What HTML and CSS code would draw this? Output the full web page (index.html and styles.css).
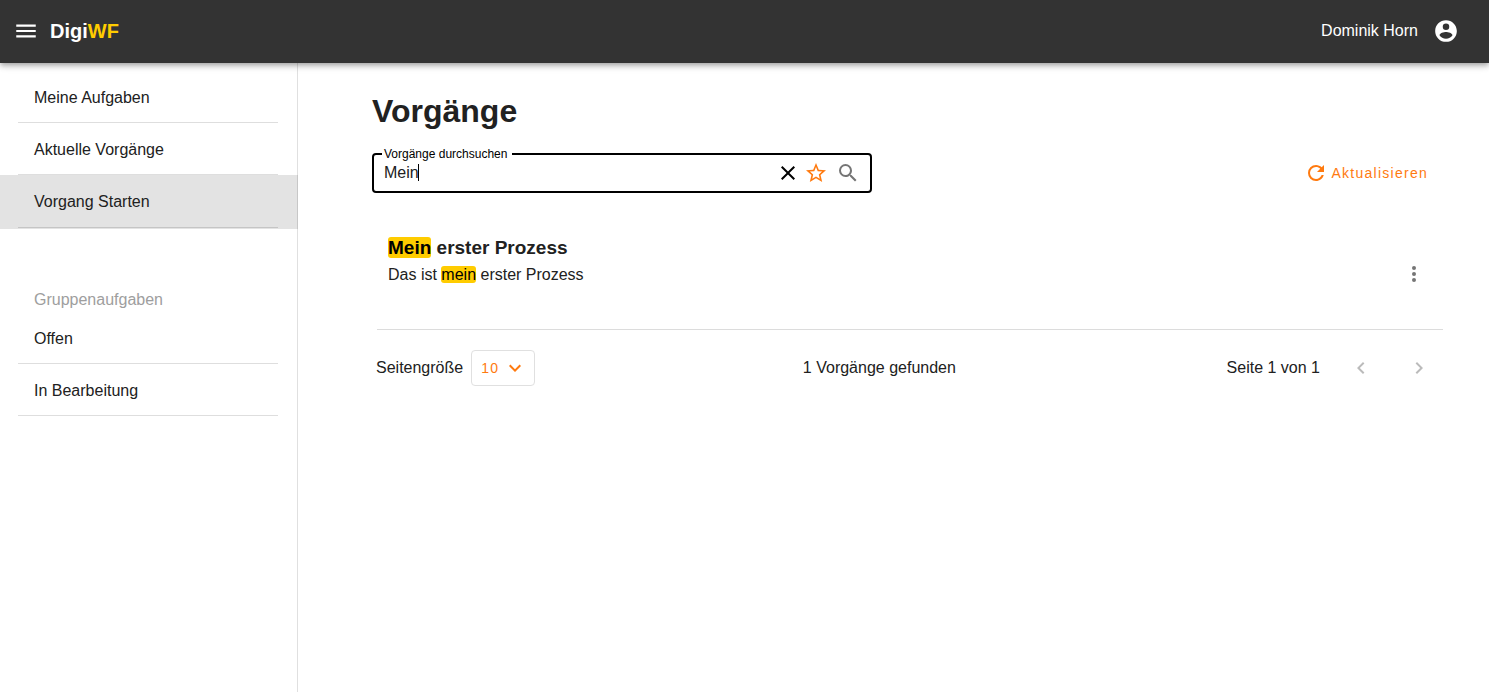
FILE: index.html
```html
<!DOCTYPE html>
<html lang="de">
<head>
<meta charset="utf-8">
<meta name="viewport" content="width=device-width, initial-scale=1">
<title>DigiWF</title>
<link rel="stylesheet" href="styles.css">
</head>
<body>
<header class="app-bar">
  <button class="icon-button bar-button" type="button" aria-label="Menü">
    <svg class="icon-large" viewBox="0 0 24 24"><path d="M3,6H21V8H3V6M3,11H21V13H3V11M3,16H21V18H3V16Z"/></svg>
  </button>
  <a class="brand" href="#">Digi<span class="brand-accent">WF</span></a>
  <span class="user-name">Dominik Horn</span>
  <button class="icon-button bar-button" type="button" aria-label="Benutzerkonto">
    <svg class="icon-large" viewBox="0 0 24 24"><path d="M12,19.2C9.5,19.2 7.29,17.92 6,16C6.03,14 10,12.9 12,12.9C14,12.9 17.97,14 18,16C16.71,17.92 14.5,19.2 12,19.2M12,5A3,3 0 0,1 15,8A3,3 0 0,1 12,11A3,3 0 0,1 9,8A3,3 0 0,1 12,5M12,2A10,10 0 0,0 2,12A10,10 0 0,0 12,22A10,10 0 0,0 22,12C22,6.47 17.5,2 12,2Z"/></svg>
  </button>
</header>
<div class="layout">
  <nav class="sidebar">
    <ul class="nav-list">
      <li class="nav-item"><a class="nav-link" href="#">Meine Aufgaben</a></li>
      <li class="nav-item"><a class="nav-link" href="#">Aktuelle Vorgänge</a></li>
      <li class="nav-item nav-item-active"><a class="nav-link" href="#" aria-current="page">Vorgang Starten</a></li>
    </ul>
    <h2 class="nav-heading">Gruppenaufgaben</h2>
    <ul class="nav-list">
      <li class="nav-item"><a class="nav-link" href="#">Offen</a></li>
      <li class="nav-item"><a class="nav-link" href="#">In Bearbeitung</a></li>
    </ul>
  </nav>
  <main class="content">
    <h1 class="page-title">Vorgänge</h1>
    <div class="toolbar">
      <fieldset class="search">
        <legend class="search-legend"><label for="search">Vorgänge durchsuchen</label></legend>
        <div class="search-row">
          <div class="search-field">
            <input class="search-input" id="search" type="text" value="Mein">
            <span class="caret"></span>
          </div>
          <button class="icon-button clear" type="button" aria-label="Leeren">
            <svg class="icon" viewBox="0 0 24 24"><path d="M19,6.41L17.59,5L12,10.59L6.41,5L5,6.41L10.59,12L5,17.59L6.41,19L12,13.41L17.59,19L19,17.59L13.41,12L19,6.41Z"/></svg>
          </button>
          <button class="icon-button accent" type="button" aria-label="Favorit">
            <svg class="icon" viewBox="0 0 24 24"><path d="M12,15.39L8.24,17.66L9.23,13.38L5.91,10.5L10.29,10.13L12,6.09L13.71,10.13L18.09,10.5L14.77,13.38L15.76,17.66M22,9.24L14.81,8.63L12,2L9.19,8.63L2,9.24L7.45,13.97L5.82,21L12,17.27L18.18,21L16.54,13.97L22,9.24Z"/></svg>
          </button>
          <button class="icon-button find" type="button" aria-label="Suchen">
            <svg class="icon" viewBox="0 0 24 24"><path d="M9.5,3A6.5,6.5 0 0,1 16,9.5C16,11.11 15.41,12.59 14.44,13.73L14.71,14H15.5L20.5,19L19,20.5L14,15.5V14.71L13.73,14.44C12.59,15.41 11.11,16 9.5,16A6.5,6.5 0 0,1 3,9.5A6.5,6.5 0 0,1 9.5,3M9.5,5C7,5 5,7 5,9.5C5,12 7,14 9.5,14C12,14 14,12 14,9.5C14,7 12,5 9.5,5Z"/></svg>
          </button>
        </div>
      </fieldset>
      <button class="refresh" type="button">
        <svg class="icon" viewBox="0 0 24 24"><path d="M17.65,6.35C16.2,4.9 14.21,4 12,4A8,8 0 0,0 4,12A8,8 0 0,0 12,20C15.73,20 18.84,17.45 19.73,14H17.65C16.83,16.33 14.61,18 12,18A6,6 0 0,1 6,12A6,6 0 0,1 12,6C13.66,6 15.14,6.69 16.22,7.78L13,11H20V4L17.65,6.35Z"/></svg>
        Aktualisieren
      </button>
    </div>
    <article class="process">
      <div class="process-text">
        <h2 class="process-title"><mark class="hit">Mein</mark> erster Prozess</h2>
        <p class="process-description">Das ist <mark class="hit">mein</mark> erster Prozess</p>
      </div>
      <button class="icon-button muted" type="button" aria-label="Weitere Aktionen">
        <svg class="icon" viewBox="0 0 24 24"><path d="M12,16A2,2 0 0,1 14,18A2,2 0 0,1 12,20A2,2 0 0,1 10,18A2,2 0 0,1 12,16M12,10A2,2 0 0,1 14,12A2,2 0 0,1 12,14A2,2 0 0,1 10,12A2,2 0 0,1 12,10M12,4A2,2 0 0,1 14,6A2,2 0 0,1 12,8A2,2 0 0,1 10,6A2,2 0 0,1 12,4Z"/></svg>
      </button>
    </article>
    <footer class="pager">
      <div class="page-size">
        <label for="page-size">Seitengröße</label>
        <div class="select-box">
          <select class="select" id="page-size"><option>10</option><option>20</option><option>50</option></select>
          <svg class="icon select-arrow" viewBox="0 0 24 24"><path d="M7.41,8.58L12,13.17L16.59,8.58L18,10L12,16L6,10L7.41,8.58Z"/></svg>
        </div>
      </div>
      <span>1 Vorgänge gefunden</span>
      <div class="page-nav">
        <span>Seite 1 von 1</span>
        <div class="page-buttons">
          <button class="icon-button page-button" type="button" aria-label="Vorherige Seite" disabled>
            <svg class="icon" viewBox="0 0 24 24"><path d="M15.41,16.58L10.83,12L15.41,7.41L14,6L8,12L14,18L15.41,16.58Z"/></svg>
          </button>
          <button class="icon-button page-button" type="button" aria-label="Nächste Seite" disabled>
            <svg class="icon" viewBox="0 0 24 24"><path d="M8.59,16.58L13.17,12L8.59,7.41L10,6L16,12L10,18L8.59,16.58Z"/></svg>
          </button>
        </div>
      </div>
    </footer>
  </main>
</div>
</body>
</html>
```
FILE: styles.css
```css
* {
  box-sizing: border-box;
}

body {
  display: flex;
  flex-direction: column;
  min-height: 100vh;
  margin: 0;
  background: #fff;
  color: #212121;
  font: 16px/24px "Liberation Sans", Arial, sans-serif;
}

button,
input,
select {
  margin: 0;
  padding: 0;
  border: 0;
  background: none;
  color: inherit;
  font: inherit;
}

a {
  color: inherit;
  text-decoration: none;
}

svg {
  display: block;
  fill: currentColor;
}

.icon {
  flex: none;
  width: 24px;
  height: 24px;
}

.icon-large {
  width: 26px;
  height: 26px;
}

.icon-button {
  display: flex;
  flex: none;
  align-items: center;
  justify-content: center;
}

/* App bar */

.app-bar {
  position: relative;
  z-index: 1;
  display: flex;
  align-items: center;
  padding: 18px 30px 19px 13px;
  background: #333;
  color: #fff;
  box-shadow: 0 2px 4px -1px rgba(0, 0, 0, .2), 0 4px 5px rgba(0, 0, 0, .14), 0 1px 10px rgba(0, 0, 0, .12);
}

.brand {
  margin: 0 auto 0 11px;
  font-size: 20px;
  font-weight: bold;
}

.brand-accent {
  color: #fc0;
}

.user-name {
  margin-right: 15px;
}

/* Sidebar */

.layout {
  display: flex;
  flex: 1;
}

.sidebar {
  flex: none;
  width: 298px;
  padding-top: 8px;
  border-right: 1px solid #e0e0e0;
}

.nav-list {
  margin: 0;
  padding: 0;
  list-style: none;
}

.nav-item {
  padding: 0 19px 0 18px;
}

.nav-item-active {
  margin-right: -1px;
  padding: 0 20px 1px 18px;
  background: rgba(0, 0, 0, .11);
}

.nav-link {
  display: block;
  padding: 15px 16px 12px;
  border-bottom: 1px solid rgba(0, 0, 0, .13);
}

.nav-item-active .nav-link {
  padding-bottom: 13px;
}

.nav-heading {
  margin: 59px 34px 0;
  color: #9e9e9e;
  font-size: 16px;
  font-weight: normal;
}

/* Content */

.content {
  flex: 1;
  min-width: 0;
  padding: 28px 46px 28px 74px;
}

.page-title {
  margin: 0 0 22px;
  font-size: 32px;
  line-height: 40px;
}

.toolbar {
  display: flex;
  align-items: center;
  justify-content: space-between;
}

.search {
  width: 500px;
  min-width: 0;
  margin: 0;
  padding: 0 10px 0 8px;
  border: 2px solid #000;
  border-radius: 4px;
}

.search-legend {
  padding: 0 5px 0 2px;
  color: #000;
  font-size: 12px;
  line-height: 2px;
}

.search-row {
  display: flex;
  align-items: center;
  height: 36px;
  padding-left: 2px;
}

.search-field {
  position: relative;
  flex: 1;
}

.search-input {
  display: block;
  width: 100%;
  height: 24px;
  outline: 0;
}

/* Insertion mark behind the typed word */
.caret {
  position: absolute;
  top: 3px;
  left: 34px;
  width: 1px;
  height: 17px;
  background: #000;
}

.clear {
  margin-right: 4px;
  color: #000;
}

.accent {
  color: #ff7a0f;
}

.find {
  margin-left: 8px;
  color: #757575;
}

.refresh {
  display: flex;
  align-items: center;
  gap: 3px;
  padding: 0 15px;
  color: #ff7a0f;
  font-size: 14px;
  letter-spacing: .09em;
}

.process {
  display: flex;
  align-items: center;
  margin: 21px 0 0 5px;
  padding: 20px 17px 43px 11px;
  border-bottom: 1px solid #dcdcdc;
}

.process-text {
  flex: 1;
}

.process-title {
  margin: 0 0 2px;
  font-size: 19px;
  line-height: 28px;
}

.process-description {
  margin: 0;
  line-height: 22px;
}

.hit {
  border-radius: 3px;
  background: #fc0;
  color: #000;
}

.muted {
  align-self: flex-end;
  color: #757575;
}

/* Pager */

.pager {
  display: flex;
  align-items: center;
  justify-content: space-between;
  padding: 20px 6px 0 4px;
}

.page-size,
.page-nav,
.page-buttons {
  display: flex;
  align-items: center;
}

.page-size {
  gap: 8px;
}

.select-box {
  position: relative;
}

.select {
  display: block;
  width: 64px;
  height: 36px;
  padding: 0 30px 0 9px;
  border: 1px solid #e0e0e0;
  border-radius: 4px;
  appearance: none;
  color: #ff7a0f;
  font-size: 14px;
  letter-spacing: .09em;
}

.select-arrow {
  position: absolute;
  top: 6px;
  right: 8px;
  color: #ff7a0f;
  pointer-events: none;
}

.page-nav {
  gap: 23px;
  padding-left: 3px;
}

.page-buttons {
  gap: 22px;
}

.page-button {
  width: 36px;
  height: 36px;
  color: #bbb;
}
```
